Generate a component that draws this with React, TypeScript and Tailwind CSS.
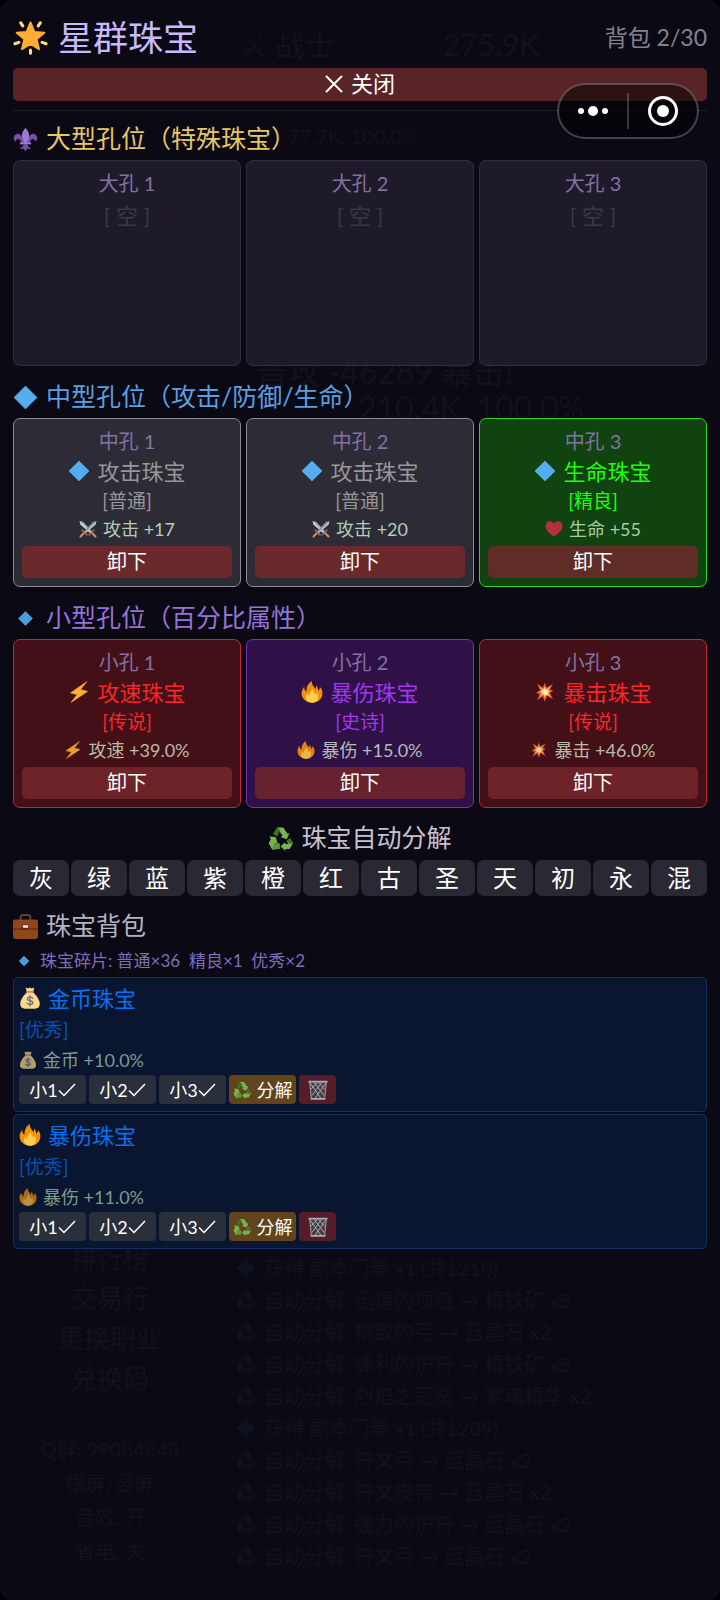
import { useState } from "react";
import type { ReactNode } from "react";
import clsx from "clsx";

type IconName =
  | "star"
  | "fleur"
  | "diamond"
  | "smallDiamond"
  | "swords"
  | "heart"
  | "bolt"
  | "fire"
  | "burst"
  | "recycle"
  | "briefcase"
  | "money"
  | "bin";

const ICONS: Record<IconName, ReactNode> = {
  star: (
    <>
      <path
        d="M18 2.500l4 9.700 10.200.8-7.900 6.700 2.500 10.300L18 24.500l-8.800 5.500 2.500-10.300L3.800 13l10.200-.8z"
        fill="#ffac33"
        stroke="#ffac33"
        strokeWidth="2"
        strokeLinejoin="round"
      />
      <g stroke="#ffd983" strokeWidth="3.200" strokeLinecap="round">
        <path d="M8 3l2 3M28 3l-2 3M2 24.500l4-1.500M34 24.500L30 23M18 31v3.200" />
      </g>
    </>
  ),
  fleur: (
    <>
      <path
        d="M15 20C13 12 9 8.500 5 10 0 12 0 19 4 21c.5-3 2.500-4.500 5-3 2 1.200 3 3 3 5h3zM21 20c2-8 6-11.500 10-10 5 2 5 9 1 11-.5-3-2.500-4.500-5-3-2 1.200-3 3-3 5h-3z"
        fill="#7450a8"
      />
      <path d="M18 1c4 5 6 9 5 14-.7 3-2 5-2.500 8h-5c-.5-3-1.800-5-2.500-8-1-5 1-9 5-14z" fill="#9a7bd0" />
      <path d="M10 22h16v3H10z" fill="#9a7bd0" />
      <path d="M15 25c0 3-2 5-5 5 1 2 3 2 5 1l3 4 3-4c2 1 4 1 5-1-3 0-5-2-5-5z" fill="#7450a8" />
    </>
  ),
  diamond: <path d="M18 1.500L34.500 18 18 34.500 1.500 18z" fill="#55acee" stroke="#55acee" strokeLinejoin="round" />,
  smallDiamond: <path d="M18 8l10 10-10 10L8 18z" fill="#4a9ddd" stroke="#4a9ddd" strokeLinejoin="round" />,
  swords: (
    <>
      <path d="M1 2l7 1.500L27.500 24 24 27.500 3 9z" fill="#a9bcc9" />
      <path d="M1 2l24.500 24-1.500 1.500L3 9z" fill="#dbe6ee" />
      <path d="M35 2l-7 1.500L8.500 24l3.500 3.500L33 9z" fill="#8899a6" />
      <path d="M35 2L10.500 26l1.500 1.500L33 9z" fill="#ccd6dd" />
      <path d="M20 30l10-10M16 30L6 20" stroke="#bf6952" strokeWidth="3" strokeLinecap="round" />
      <path d="M27 27l6 6M9 27l-6 6" stroke="#d99e82" strokeWidth="4" strokeLinecap="round" />
    </>
  ),
  heart: (
    <path
      d="M18 33C9 27 1 20 1 11.500 1 6 5 2.500 9.700 2.500c3.500 0 6.500 1.800 8.300 4.700 1.800-2.900 4.800-4.700 8.300-4.700C31 2.500 35 6 35 11.500 35 20 27 27 18 33z"
      fill="#c72f42"
    />
  ),
  bolt: <path d="M31 1L4 19.500l11 2.500L5 35l27-18-11.500-3z" fill="#ffac33" stroke="#ffac33" strokeLinejoin="round" />,
  fire: (
    <>
      <path
        d="M35 20c0 9-7 15.500-16.500 15.500S1 29 1 20.500C1 16 3 12 5.500 9 5 13 6 16 9 17c0-7 2-13 9-17-1 6 3 9 6 13 1-2 1-4 0-6 3 2 4 5 4 9 2-1 3-3 3-6 3 3 4 6 4 10z"
        fill="#f4900c"
      />
      <path
        d="M28 26c0 5.500-4 9.500-10 9.500S8 32 8 27c0-3 1-5 3-7 0 2 1 3.500 2.500 4 .5-5 2.500-9 6-11 0 4 3 6 4 9 1-.5 1.500-1.500 1.500-3 2 2 3 4 3 7z"
        fill="#ffcc4d"
      />
    </>
  ),
  burst: (
    <>
      <path
        d="M5 4l9 7 4-8 2 8 11-6-5 9 6 2-6 3 5 11-10-6-3 10-4-9-9 7 4-10-6-3 7-3z"
        fill="#e5532d"
      />
      <path d="M8 7l7 6 3-6 2 6 8-5-4 7 5 2-5 2 4 8-7-5-3 7-3-7-6 5 3-7-5-3 6-2z" fill="#f9a13c" />
      <path d="M12 11l4 4 2-4 2 4 4-2-2 4 3 1-3 1 1 5-4-3-1 4-2-4-4 2 2-4-3-2 3-1z" fill="#fff0c0" />
    </>
  ),
  recycle: (
    <>
      <path d="M13 2h9l6 9 3-1-4 9-9-3 3-2-5-7z" fill="#77b255" />
      <path d="M13 2l5 4-5 9-6-4z" fill="#3e721d" />
      <path d="M2 15l9 1 3 9-3-1-3 5 2 5H6l-5-9 3-6z" fill="#77b255" />
      <path d="M6 34l2-9h9v8z" fill="#5c9a38" />
      <path d="M18 29l7-6v3h4l-2-5 5-3 4 7-5 8h-6v3z" fill="#77b255" />
      <path d="M27 21l5-3 4 7-5 1z" fill="#3e721d" />
    </>
  ),
  briefcase: (
    <>
      <path d="M11 9V4C11 2.500 12 1.500 13 1.500h10c1 0 2 1 2 2.500v5" fill="none" stroke="#744228" strokeWidth="2.500" />
      <rect x="0" y="8" width="36" height="28" rx="3.500" fill="#8f4618" />
      <path d="M0 21h36v1.500H0z" fill="#662113" />
      <rect x="13" y="15" width="10" height="7" rx="2" fill="#662113" />
      <rect x="14" y="16" width="8" height="4" rx="1.500" fill="#ccd6dd" />
    </>
  ),
  money: (
    <>
      <path d="M11 1l4 1.500L18 1l3 1.500L25 1l-2 9H13z" fill="#fdd888" />
      <path d="M13 9h10c5 4 11 12 11 19 0 5-3 7.500-8 7.500H10c-5 0-8-2.500-8-7.500 0-7 6-15 11-19z" fill="#fdd888" />
      <path d="M12 8h12" stroke="#bf6952" strokeWidth="2" strokeLinecap="round" />
      <path
        d="M22.500 18.500c-1-1.500-2.500-2-4.500-2-2.500 0-4.300 1.200-4.300 3 0 4.200 9 1.800 9 6 0 2-2 3.200-4.700 3.200-2.200 0-4-.8-5-2.500M18 14v17"
        fill="none"
        stroke="#67757f"
        strokeWidth="2.200"
        strokeLinecap="round"
      />
    </>
  ),
  bin: (
    <>
      <path d="M3 3l3 31h24l3-31z" fill="#4c3a44" />
      <path
        d="M3 4l21 30M11 4l18 24M19 4l11 13M33 4L12 34M25 4L7 28M17 4L5 17"
        stroke="#a3aeb8"
        strokeWidth="1.800"
        fill="none"
      />
      <path d="M3 4l3 30M33 4l-3 30" stroke="#8e9aa5" strokeWidth="2" />
      <path d="M2 3h32M6 34h24" stroke="#a3aeb8" strokeWidth="3" strokeLinecap="round" />
    </>
  ),
};

function Icon({ name, className }: { name: IconName; className?: string }) {
  return (
    <svg viewBox="0 0 36 36" aria-hidden="true" className={clsx("shrink-0", className)}>
      {ICONS[name]}
    </svg>
  );
}

type Tone = "common" | "fine" | "legend" | "epic";

const TONES: Record<Tone, { card: string; text: string; stat: string; button: string }> = {
  common: {
    card: "border-[#8b8a92] bg-[#2d2b36]",
    text: "text-[#989898]",
    stat: "text-[#b4ccb8]",
    button: "bg-[#6a2a2c]",
  },
  fine: {
    card: "border-[#2bd522] bg-[#10430f]",
    text: "text-[#1eff0c]",
    stat: "text-[#a5cea5]",
    button: "bg-[#602d26]",
  },
  legend: {
    card: "border-[#c02a30] bg-[#441018]",
    text: "text-[#fb2628]",
    stat: "text-[#b9bba9]",
    button: "bg-[#6e2328]",
  },
  epic: {
    card: "border-[#7438b4] bg-[#2f1148]",
    text: "text-[#a336ee]",
    stat: "text-[#b3bcb8]",
    button: "bg-[#66222f]",
  },
};

interface Jewel {
  name: string;
  icon: IconName;
  rarity: string;
  stat: string;
  statIcon: IconName;
  tone: Tone;
}

const mediumSlots: Jewel[] = [
  { name: "攻击珠宝", icon: "diamond", rarity: "普通", stat: "攻击 +17", statIcon: "swords", tone: "common" },
  { name: "攻击珠宝", icon: "diamond", rarity: "普通", stat: "攻击 +20", statIcon: "swords", tone: "common" },
  { name: "生命珠宝", icon: "diamond", rarity: "精良", stat: "生命 +55", statIcon: "heart", tone: "fine" },
];

const smallSlots: Jewel[] = [
  { name: "攻速珠宝", icon: "bolt", rarity: "传说", stat: "攻速 +39.0%", statIcon: "bolt", tone: "legend" },
  { name: "暴伤珠宝", icon: "fire", rarity: "史诗", stat: "暴伤 +15.0%", statIcon: "fire", tone: "epic" },
  { name: "暴击珠宝", icon: "burst", rarity: "传说", stat: "暴击 +46.0%", statIcon: "burst", tone: "legend" },
];

const bagItems: { name: string; icon: IconName; stat: string }[] = [
  { name: "金币珠宝", icon: "money", stat: "金币 +10.0%" },
  { name: "暴伤珠宝", icon: "fire", stat: "暴伤 +11.0%" },
];

const qualities = ["灰", "绿", "蓝", "紫", "橙", "红", "古", "圣", "天", "初", "永", "混"];

const sideMenu = ["排行榜", "交易行", "更换职业", "兑换码"];
const sideFooter = ["Q群: 99084848", "横屏/竖屏", "音效: 开", "省电: 关"];
const battleLog = [
  "获得 副本门票 x1 (共1210)",
  "自动分解: 迅捷的项链 → 精铁矿 x5",
  "自动分解: 精致的弓 → 蓝晶石 x2",
  "自动分解: 锋利的护符 → 精铁矿 x5",
  "自动分解: 烈焰之冠冕 → 紫魂精华 x2",
  "获得 副本门票 x1 (共1209)",
  "自动分解: 符文弓 → 蓝晶石 x2",
  "自动分解: 符文皮带 → 蓝晶石 x2",
  "自动分解: 强力的护符 → 蓝晶石 x2",
  "自动分解: 符文弓 → 蓝晶石 x2",
];

/** Game screen that shows faintly through the jewel panel */
function DimmedGame() {
  return (
    <div
      aria-hidden="true"
      className="pointer-events-none absolute inset-0 flex flex-col justify-between overflow-hidden text-[#13111a]"
    >
      <div className="flex flex-col pl-[240px] whitespace-nowrap">
        <div className="flex h-[88px] items-center gap-24 text-3xl">
          <span>⚔ 战士</span>
          <span className="pl-3">275.9K</span>
        </div>
        <div className="mt-8 flex h-8 items-center pl-12 text-xl">77.7K, 100.0%</div>
        <div className="mt-[204px] pl-4 text-[32px] leading-8">普攻 -46289 暴击!</div>
        <div className="pl-[118px] text-[32px] leading-10">210.4K, 100.0%</div>
      </div>
      <div className="flex items-end whitespace-nowrap">
        <div className="flex w-[220px] flex-col items-center pb-8">
          {sideMenu.map((label) => (
            <div key={label} className="flex h-10 items-center text-[26px]">
              {label}
            </div>
          ))}
          <div className="mt-[34px] flex flex-col items-center text-xl">
            {sideFooter.map((label) => (
              <div key={label} className="flex h-[34px] items-center">
                {label}
              </div>
            ))}
          </div>
        </div>
        <div className="flex flex-col pb-7 pl-4">
          {battleLog.map((line, i) => (
            <div key={i} className="flex h-8 items-center gap-2 text-xl">
              <Icon name={line.startsWith("获得") ? "diamond" : "recycle"} className="size-5 opacity-5" />
              {line}
            </div>
          ))}
        </div>
      </div>
    </div>
  );
}

function SectionTitle({ icon, className, children }: { icon: IconName; className?: string; children: ReactNode }) {
  return (
    <h2 className={clsx("flex h-9 items-center gap-2 text-[25px] whitespace-nowrap", className)}>
      <Icon name={icon} className="size-[25px]" />
      {children}
    </h2>
  );
}

function EmptySlot({ label }: { label: string }) {
  return (
    <div className="flex min-h-[206px] flex-col items-center rounded-[7px] border border-[#322c40] bg-[#1e1a2a] px-2 pt-1.5">
      <div className="flex h-8 items-center text-xl text-[#8372a5]">{label}</div>
      <div className="flex h-8 items-center text-[22px] text-[#3b3648]">[ 空 ]</div>
    </div>
  );
}

function JewelSlot({ label, jewel }: { label: string; jewel: Jewel }) {
  const tone = TONES[jewel.tone];
  return (
    <div className={clsx("flex flex-col items-center rounded-[7px] border px-2 pt-1.5 pb-2", tone.card)}>
      <div className="flex h-8 items-center text-xl text-[#8372a5]">{label}</div>
      <div className={clsx("flex h-7 items-center gap-[7px] text-[22px]", tone.text)}>
        <Icon name={jewel.icon} className="size-[22px]" />
        {jewel.name}
      </div>
      <div className={clsx("flex h-8 items-center text-[19px]", tone.text)}>[{jewel.rarity}]</div>
      <div className={clsx("flex h-6 items-center gap-1.5 text-lg", tone.stat)}>
        <Icon name={jewel.statIcon} className="size-[18px] opacity-90" />
        {jewel.stat}
      </div>
      <button
        type="button"
        className={clsx(
          "mt-[5px] flex h-8 w-full items-center justify-center rounded-[5px] pb-0.5 text-xl text-white",
          tone.button
        )}
      >
        卸下
      </button>
    </div>
  );
}

function BagItem({ name, icon, stat }: { name: string; icon: IconName; stat: string }) {
  return (
    <li className="rounded-[5px] border border-[#113163] bg-[#0a1530] px-[5px] pt-[5px] pb-[7px]">
      <div className="flex h-[30px] items-center gap-[7px] text-[22px] text-[#0a70ee]">
        <Icon name={icon} className="size-[22px]" />
        {name}
      </div>
      <div className="flex h-[34px] items-center text-[19px] text-[#0c50ac]">[优秀]</div>
      <div className="flex h-[26px] items-center gap-1.5 text-lg text-[#7f9a8c]">
        <Icon name={icon} className="size-[18px] opacity-70" />
        {stat}
      </div>
      <div className="mt-0.5 flex gap-[3px] text-lg text-white">
        {[1, 2, 3].map((n) => (
          <button key={n} type="button" className="flex h-[29px] w-[67px] items-center justify-center rounded bg-[#2a303b]">
            小{n}
            <svg viewBox="0 0 18 18" aria-hidden="true" className="size-[18px]">
              <path d="M1 9.500l5 5L17 3" fill="none" stroke="currentColor" strokeWidth="1.500" />
            </svg>
          </button>
        ))}
        <button
          type="button"
          className="flex h-[29px] w-[67px] items-center justify-center gap-1.5 rounded bg-[#61441c] whitespace-nowrap"
        >
          <Icon name="recycle" className="size-[18px]" />
          分解
        </button>
        <button
          type="button"
          aria-label="丢弃"
          className="flex h-[29px] w-[37px] items-center justify-center rounded bg-[#561c27]"
        >
          <Icon name="bin" className="size-5" />
        </button>
      </div>
    </li>
  );
}

function Capsule() {
  return (
    <div className="absolute top-[83px] right-[21px] flex h-14 w-[142px] items-center rounded-full border-2 border-white/25 bg-black/50">
      <button type="button" aria-label="更多" className="flex flex-1 items-center justify-center gap-1">
        <span className="size-1.5 rounded-full bg-white" />
        <span className="size-2.5 rounded-full bg-white" />
        <span className="size-1.5 rounded-full bg-white" />
      </button>
      <span className="h-9 w-0.5 bg-white/20" />
      <button type="button" aria-label="退出" className="flex flex-1 items-center justify-center">
        <span className="flex size-[30px] items-center justify-center rounded-full border-3 border-white">
          <span className="size-3 rounded-full bg-white" />
        </span>
      </button>
    </div>
  );
}

export default function App() {
  const [enabled, setEnabled] = useState<string[]>([]);

  const toggle = (q: string) =>
    setEnabled((prev) => (prev.includes(q) ? prev.filter((v) => v !== q) : [...prev, q]));

  return (
    <div className="min-h-screen bg-black font-[Lato,'Noto_Sans_CJK_SC',sans-serif]">
      <div className="relative min-h-screen rounded-xl bg-[#0b0914]">
        <DimmedGame />
        <main className="relative px-[13px] pb-8">
          <header className="flex h-[68px] items-center justify-between pt-3 pb-1.5">
            <h1 className="flex items-center gap-2.5 text-[35px] leading-none text-[#c9b8fb]">
              <Icon name="star" className="size-[35px]" />
              星群珠宝
            </h1>
            <span className="text-[23px] leading-none text-[#84818f]">背包 2/30</span>
          </header>
          <button
            type="button"
            className="flex h-[33px] w-full items-center justify-center gap-2 rounded-[5px] bg-[#592427] pb-0.5 text-[22px] text-white"
          >
            <svg viewBox="0 0 18 18" aria-hidden="true" className="size-[18px]">
              <path d="M1 1l16 16M17 1L1 17" stroke="currentColor" strokeWidth="2" />
            </svg>
            关闭
          </button>
          <div className="mt-[9px] h-px bg-[#1f1b29]" />

          <div className="mt-2.5 flex flex-col gap-[13px]">
            <section>
              <SectionTitle icon="fleur" className="mb-[3px] text-[#e5c768]">
                大型孔位（特殊珠宝）
              </SectionTitle>
              <div className="grid grid-cols-3 gap-[5px]">
                {[1, 2, 3].map((n) => (
                  <EmptySlot key={n} label={`大孔 ${n}`} />
                ))}
              </div>
            </section>
            <section>
              <SectionTitle icon="diamond" className="mb-[3px] text-[#5b9fe0]">
                中型孔位（攻击/防御/生命）
              </SectionTitle>
              <div className="grid grid-cols-3 gap-[5px]">
                {mediumSlots.map((jewel, i) => (
                  <JewelSlot key={i} label={`中孔 ${i + 1}`} jewel={jewel} />
                ))}
              </div>
            </section>
            <section>
              <SectionTitle icon="smallDiamond" className="mb-[3px] text-[#9673d8]">
                小型孔位（百分比属性）
              </SectionTitle>
              <div className="grid grid-cols-3 gap-[5px]">
                {smallSlots.map((jewel, i) => (
                  <JewelSlot key={i} label={`小孔 ${i + 1}`} jewel={jewel} />
                ))}
              </div>
            </section>
          </div>

          <section className="mt-3">
            <SectionTitle icon="recycle" className="mb-1 justify-center text-[#c4c2d0]">
              珠宝自动分解
            </SectionTitle>
            <div className="grid grid-cols-12 gap-0.5">
              {qualities.map((q) => (
                <button
                  key={q}
                  type="button"
                  aria-pressed={enabled.includes(q)}
                  onClick={() => toggle(q)}
                  className={clsx(
                    "flex h-9 items-center justify-center rounded-[7px] text-2xl text-white",
                    enabled.includes(q) ? "bg-[#4a3d6b]" : "bg-[#2a2833]"
                  )}
                >
                  {q}
                </button>
              ))}
            </div>
          </section>

          <section className="mt-3">
            <SectionTitle icon="briefcase" className="text-[#b5b2c2]">
              珠宝背包
            </SectionTitle>
            <p className="mt-[5px] mb-1 flex h-6 items-center gap-[7px] pl-0.5 text-[17px] text-[#7f6fb8]">
              <Icon name="smallDiamond" className="size-[18px]" />
              <span className="whitespace-pre">珠宝碎片: 普通×36  精良×1  优秀×2</span>
            </p>
            <ul className="flex flex-col gap-0.5">
              {bagItems.map((item) => (
                <BagItem key={item.name} {...item} />
              ))}
            </ul>
          </section>
        </main>
        <Capsule />
      </div>
    </div>
  );
}
